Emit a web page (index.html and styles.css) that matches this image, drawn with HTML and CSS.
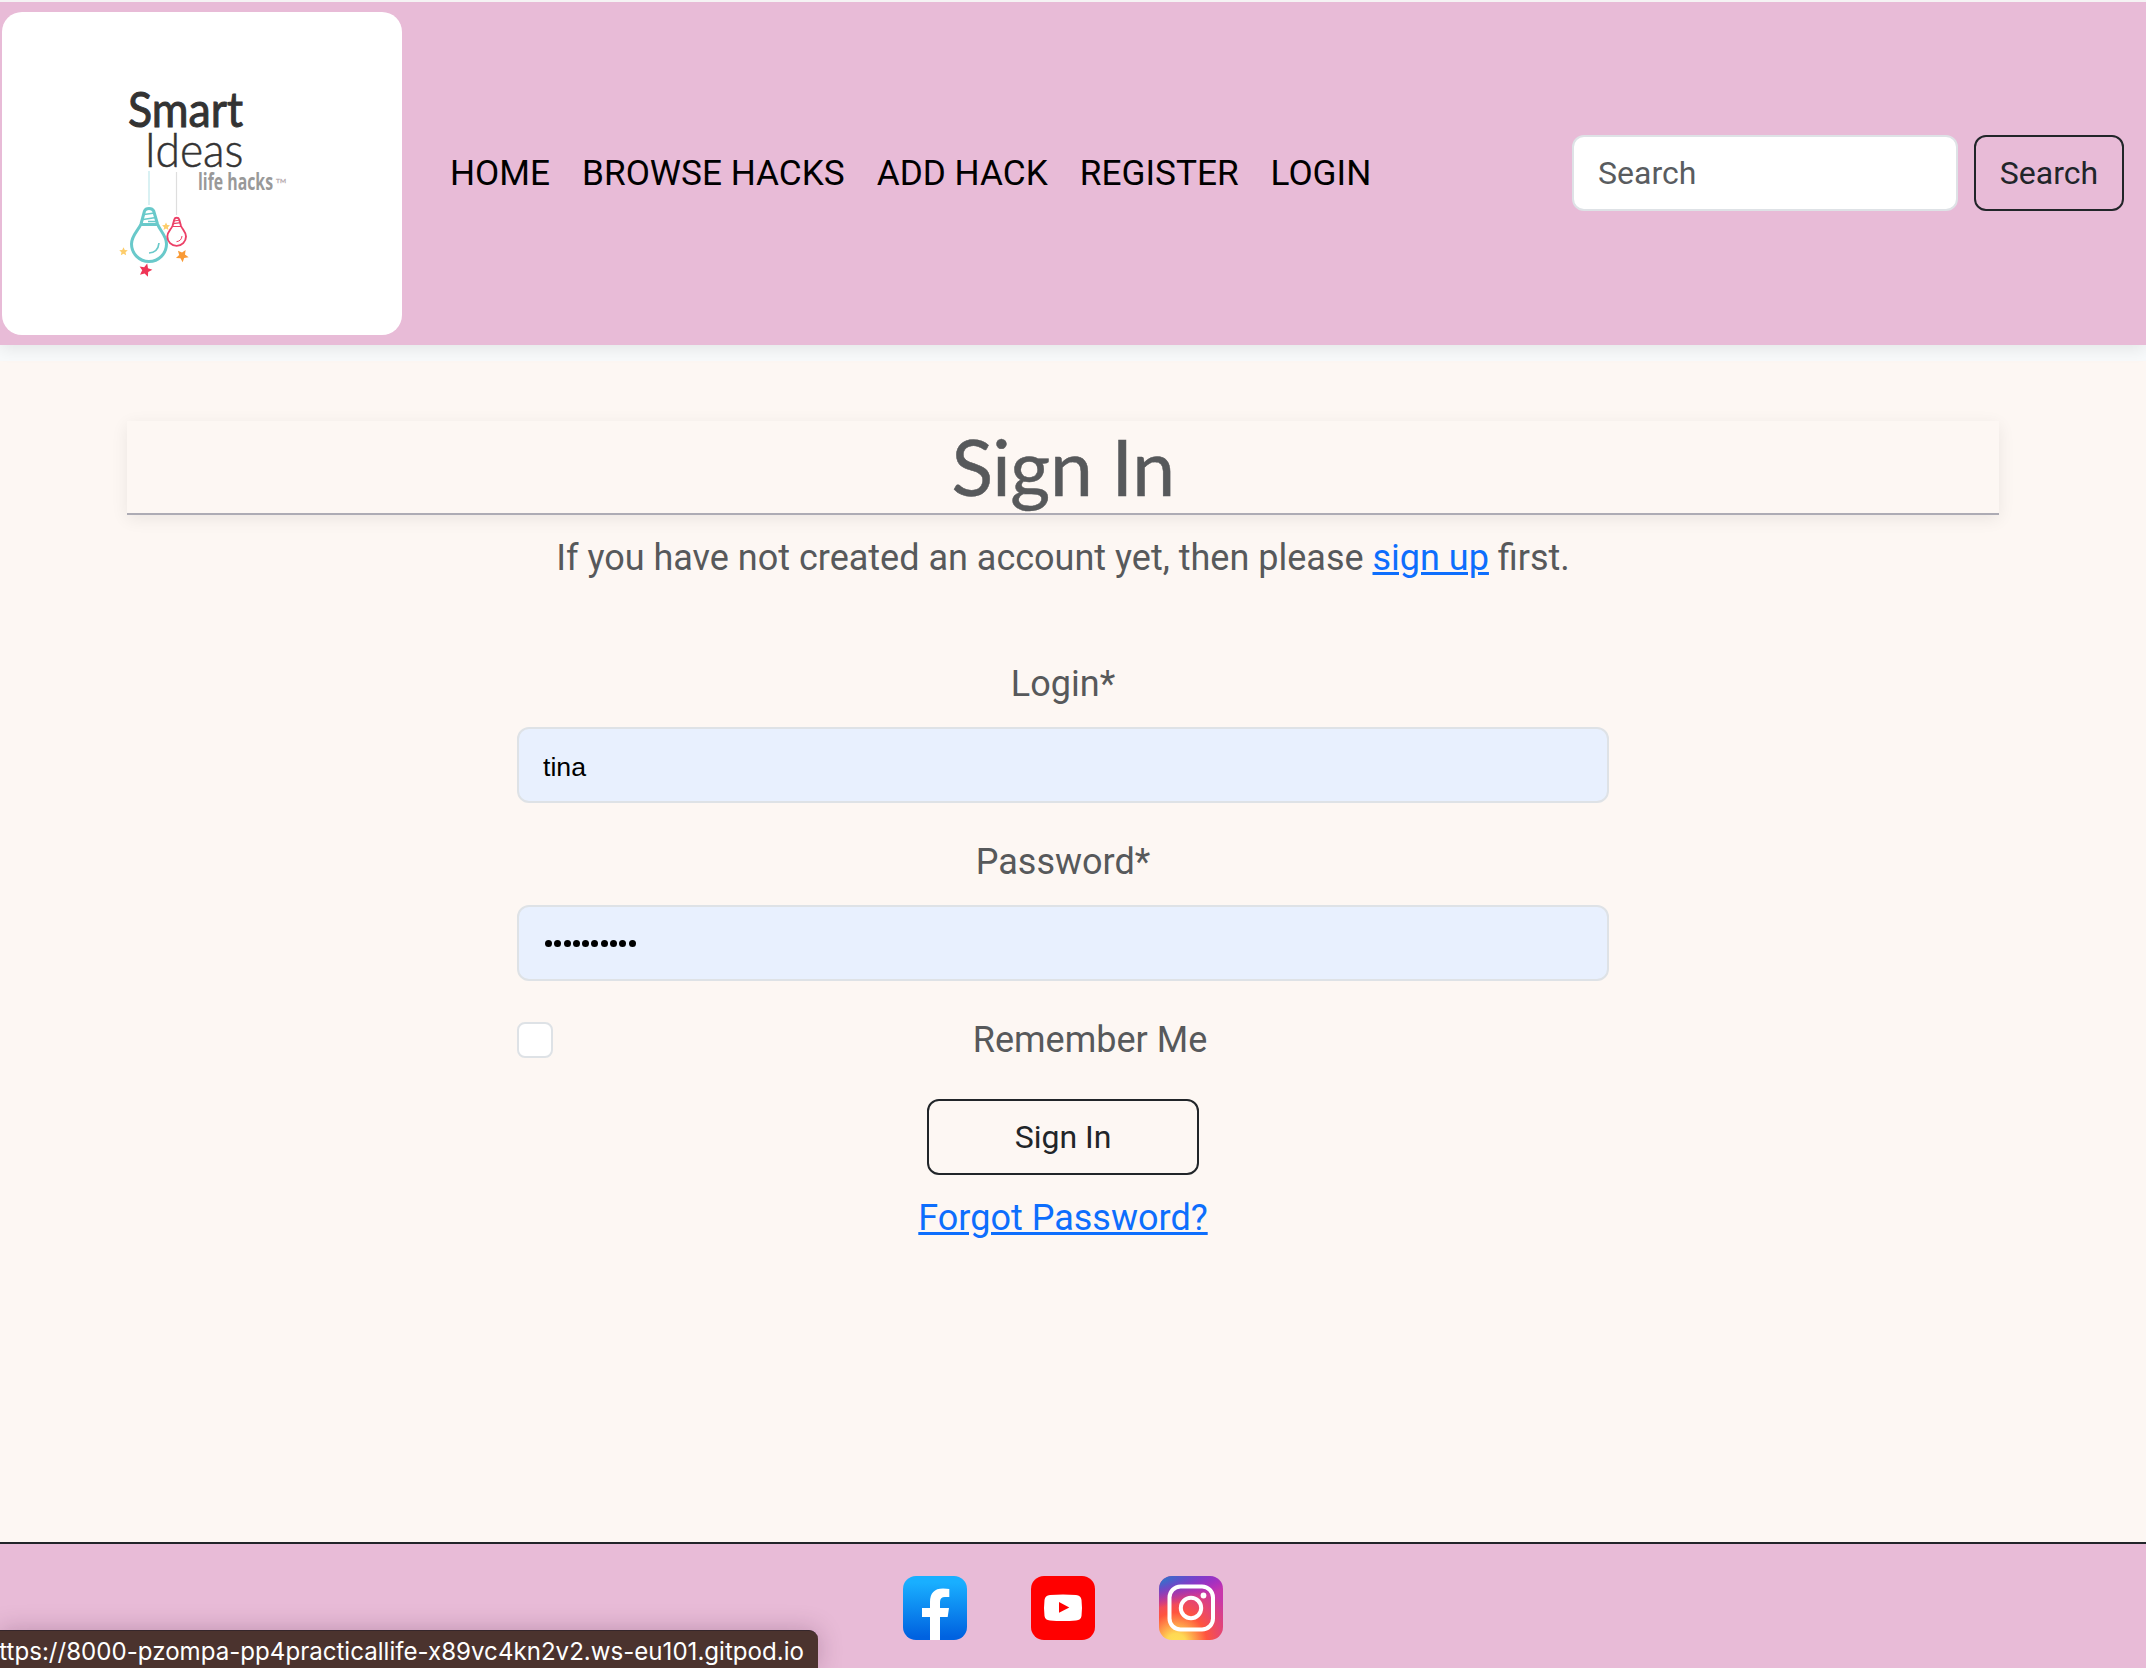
FILE: index.html
```html
<!DOCTYPE html>
<html lang="en">
<head>
<meta charset="utf-8">
<title>Sign In</title>
<link rel="stylesheet" href="styles.css">
</head>
<body>
<header class="navbar">
  <a class="brand" href="#">
    <svg width="400" height="323" viewBox="2 12 400 323">
      <g class="logo-text">
        <text x="128" y="127" font-size="49" textLength="115" lengthAdjust="spacingAndGlyphs" fill="#333" stroke="#333" stroke-width="1">Smart</text>
        <text class="light" x="144.500" y="166.500" font-size="47" textLength="99" lengthAdjust="spacingAndGlyphs" fill="#333" stroke="#333" stroke-width=".5">Ideas</text>
        <text class="tagline" x="198" y="189.500" font-size="22.500" textLength="75" lengthAdjust="spacingAndGlyphs" fill="#999">life hacks</text>
        <text x="276" y="182.500" font-size="6.500" textLength="10" lengthAdjust="spacingAndGlyphs" fill="#b9aeb2" stroke="#b9aeb2" stroke-width=".3">TM</text>
      </g>
      <path d="M149 171v34" stroke="#d9f1f3" stroke-width="2"/>
      <path d="M176.500 172v43" stroke="#dedede" stroke-width="1.200"/>
      <g fill="none" stroke="#69c9ca" stroke-width="3" stroke-linejoin="round">
        <path d="M141 224L144.500 211Q145.500 208.500 149 208.500Q152.500 208.500 153.700 211L157.500 224C160 231 166.500 235.500 166.500 244A17.300 17.300 0 0 1 131.500 244C131.500 235.500 138 231 141 224Z"/>
        <path d="M141 224.500H157.500"/>
        <path d="M144 214.500L154.500 213M143 219.500L156 217.500M148 221.500H157" stroke-width="1.300"/>
        <path d="M159 243Q158 252.500 149 253" stroke-width="1.700"/>
      </g>
      <g fill="none" stroke="#ec4067" stroke-width="1.900" stroke-linejoin="round">
        <path d="M172.500 226L174.300 219.500Q174.800 217.700 176.700 217.700Q178.700 217.700 179.200 219.500L181 226C182.500 229.500 186 232 186 236.500A9.300 9.300 0 0 1 167.300 236.500C167.300 232 171 229.500 172.500 226Z"/>
        <path d="M172.500 226.500H181M174 221L180 220M173.500 223.700L180.500 222.700" stroke-width="1.200"/>
        <path d="M182 236Q181.500 241 176.500 241.700" stroke-width="1"/>
      </g>
      <path d="M0-10L3-3.500 10-3 4.700 1.800 6.200 9 0 5.300-6.200 9-4.700 1.800-10-3-3-3.500Z" fill="#fdcd6b" transform="translate(123.500 251.500) scale(.43)"/>
      <path d="M0-10L3-3.500 10-3 4.700 1.800 6.200 9 0 5.300-6.200 9-4.700 1.800-10-3-3-3.500Z" fill="#fdcd6b" transform="translate(166 226.500) scale(.4)"/>
      <path d="M0-10L3-3.500 10-3 4.700 1.800 6.200 9 0 5.300-6.200 9-4.700 1.800-10-3-3-3.500Z" fill="#ef3556" transform="translate(145.500 270) rotate(15) scale(.66)"/>
      <path d="M0-10L3-3.500 10-3 4.700 1.800 6.200 9 0 5.300-6.200 9-4.700 1.800-10-3-3-3.500Z" fill="#f99a35" transform="translate(182 255.500) rotate(-40) scale(.63)"/>
    </svg>
  </a>
  <nav class="nav-links">
    <a href="#">HOME</a><a href="#">BROWSE HACKS</a><a href="#">ADD HACK</a><a href="#">REGISTER</a><a href="#">LOGIN</a>
  </nav>
  <form class="search">
    <input class="control search-input" type="text" placeholder="Search">
    <button class="btn search-btn" type="button">Search</button>
  </form>
</header>
<div class="nav-gap"></div>
<main class="content">
  <h1 class="title">Sign In</h1>
  <p class="intro">If you have not created an account yet, then please <a href="#">sign up</a> first.</p>
  <form class="login">
    <label class="label" for="login">Login*</label>
    <input class="control filled" id="login" type="text" value="tina">
    <label class="label">Password*</label>
    <div class="control filled password"><i></i><i></i><i></i><i></i><i></i><i></i><i></i><i></i><i></i><i></i></div>
    <div class="remember"><span class="check"></span><span class="remember-text">Remember Me</span></div>
    <button class="btn submit" type="button">Sign In</button>
    <a class="forgot" href="#">Forgot Password?</a>
  </form>
</main>
<footer class="footer">
  <svg width="64" height="64" viewBox="0 0 64 64">
    <defs><linearGradient id="fb" x2="0" y2="1"><stop offset=".1" stop-color="#19afff"/><stop offset=".95" stop-color="#0062e0"/></linearGradient></defs>
    <rect width="64" height="64" rx="13" fill="url(#fb)"/>
    <path d="M27 64V41H19V32H27V26Q27 12.500 40 12.500Q44 12.500 46.300 13V21H42Q37 21 37 26V32H46L44.700 41H37V64Z" fill="#fff"/>
  </svg>
  <svg width="64" height="64" viewBox="0 0 64 64">
    <rect width="64" height="64" rx="13" fill="#f00"/>
    <path d="M19 19Q32 17.800 45 19Q50 19.500 50.500 24Q51.500 32 50.500 40Q50 44 45 44.500Q32 45.500 19 44.500Q14 44 13.500 40Q12.500 32 13.500 24Q14 19.500 19 19Z" fill="#fff"/>
    <path d="M28 26L38.300 31.500 28 36.800Z" fill="#f00"/>
  </svg>
  <svg width="64" height="64" viewBox="0 0 64 64">
    <defs>
      <radialGradient id="ig" cx=".27" cy="1.050" r="1"><stop offset=".07" stop-color="#ffdd55"/><stop offset=".15" stop-color="#fed954"/><stop offset=".48" stop-color="#ff543e"/><stop offset=".98" stop-color="#c837ab"/></radialGradient>
      <radialGradient id="ig2" gradientUnits="userSpaceOnUse" cx="0" cy="0" r="1" gradientTransform="matrix(5.600 28 -115 23 -10 5)"><stop offset="0" stop-color="#3771c8"/><stop offset=".13" stop-color="#3771c8"/><stop offset="1" stop-color="#60f" stop-opacity="0"/></radialGradient>
    </defs>
    <rect width="64" height="64" rx="13" fill="url(#ig)"/><rect width="64" height="64" rx="13" fill="url(#ig2)"/>
    <g fill="none" stroke="#fff" stroke-width="4"><rect x="10.500" y="10.500" width="43.500" height="43" rx="11"/><circle cx="32" cy="32" r="10.200"/></g>
    <circle cx="44.500" cy="19.500" r="2.900" fill="#fff"/>
  </svg>
  <div class="status"><span>https://8000-pzompa-pp4practicallife-x89vc4kn2v2.ws-eu101.gitpod.io</span></div>
</footer>
</body>
</html>
```
FILE: styles.css
```css
* { box-sizing: border-box; }
body {
  margin: 0;
  height: 1668px;
  overflow: hidden;
  display: flex;
  flex-direction: column;
  background: #fdf7f3;
  color: #57595b;
  font: 400 36px/1.5 Roboto, sans-serif;
}
a { color: #0d6efd; text-decoration: underline; }
.navbar {
  display: flex;
  align-items: center;
  height: 345px;
  flex: none;
  padding: 0 22px 1px 2px;
  border-top: 2px solid #f5f3f4;
  background: #e8bbd7;
  z-index: 1;
  box-shadow: 0 4px 16px rgba(0, 0, 0, .085);
}
.brand { height: 323px; width: 400px; border-radius: 20px; background: #fff; display: block; }
.brand svg { display: block; }
.logo-text { font-family: Lato, sans-serif; }
.light { font-weight: 300; }
.tagline { font-family: "Open Sans", sans-serif; font-weight: 700; }
.nav-links { display: flex; gap: 32px; margin-left: 48px; flex: 1; font-size: 35.2px; }
.nav-links a { color: #000; text-decoration: none; white-space: nowrap; }
.search { display: flex; gap: 16px; }
.control {
  width: 100%;
  height: 76px;
  border: 2px solid #dee2e6;
  border-radius: 12px;
  padding: 12px 24px;
  background: #fff;
  font: 400 32px/1.5 Roboto, sans-serif;
}
.search-input { width: 386px; }
.search-input::placeholder { color: #595c5f; opacity: 1; }
.btn {
  height: 76px;
  padding: 0;
  border: 2px solid #212529;
  border-radius: 12px;
  background: transparent;
  color: #212529;
  font: 400 32px/1.5 Roboto, sans-serif;
}
.search-btn { width: 150px; }
.nav-gap { height: 16px; flex: none; background: #f8fafb; }
.content {
  width: 1872px;
  margin: 60px 0 0 127px;
  flex: 1;
  display: flex;
  flex-direction: column;
  align-items: center;
}
.title {
  width: 100%;
  height: 94px;
  margin: 0;
  border-bottom: 2px solid #adabb4;
  box-shadow: 0 4px 16px rgba(0, 0, 0, .075);
  text-align: center;
  font: 400 76.8px/91px Lato, sans-serif;
  letter-spacing: -.4px;
  -webkit-text-stroke: .5px currentColor;
}
.intro { margin: 16px 0 72px; }
.login { width: 1092px; display: flex; flex-direction: column; align-items: center; }
.label { margin-bottom: 16px; }
.filled { background: #e8f0fe; color: #000; margin-bottom: 32px; flex: none; }
input.filled { font: 26.7px "Liberation Sans", Arial, sans-serif; padding-top: 16px; }
.password { display: flex; align-items: center; gap: 2.300px; padding-left: 26px; }
.password i { width: 7px; height: 7px; border-radius: 50%; background: #000; }
.remember { width: 100%; display: flex; align-items: center; }
.check { width: 36px; height: 36px; border: 2px solid #dee2e6; border-radius: 8px; background: #fff; }
.remember-text { flex: 1; text-align: center; padding-left: 18px; }
.submit { width: 272px; margin: 32px 0 16px; }
.footer {
  position: relative;
  flex: none;
  height: 126px;
  padding: 32px 20px 0 0;
  border-top: 2px solid #212529;
  background: #e8bbd7;
  display: flex;
  justify-content: center;
  gap: 64px;
}
.status {
  position: absolute;
  left: 0;
  bottom: 0;
  width: 818px;
  height: 38px;
  display: flex;
  justify-content: flex-end;
  padding-right: 14px;
  overflow: hidden;
  border-top: 1px solid #35262b;
  border-radius: 0 9px 0 0;
  background: #4b332e;
  color: #fff;
  font: 24.1px/41px Inter, sans-serif;
  white-space: nowrap;
  box-shadow: 0 0 24px rgba(60, 20, 50, .25);
}
```
